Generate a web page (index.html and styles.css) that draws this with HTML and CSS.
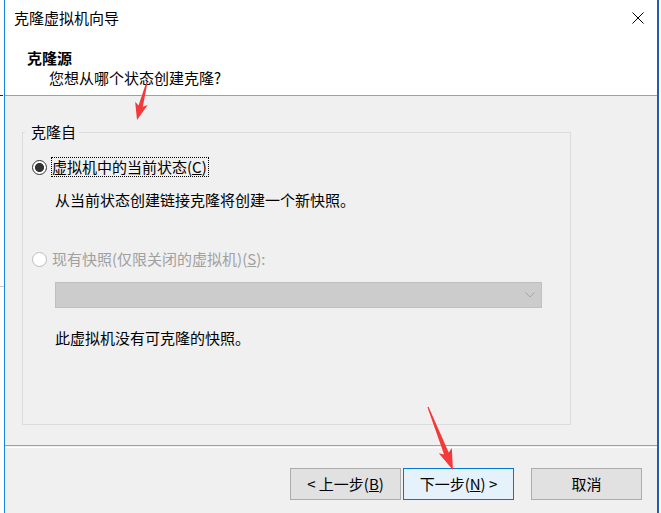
FILE: index.html
```html
<!DOCTYPE html>
<html lang="zh-CN">
<head>
<meta charset="utf-8">
<title>克隆虚拟机向导</title>
<link rel="stylesheet" href="styles.css">
</head>
<body>
<div class="screen">
  <div class="strip">
    <span class="stray s1"></span>
    <span class="stray s2"></span>
  </div>
  <div class="window">
    <div class="titlebar">
      <span class="title">克隆虚拟机向导</span>
      <svg class="close" width="12" height="12" viewBox="0 0 12 12"><path d="M0.5 0.5 L11.5 11.5 M11.5 0.5 L0.5 11.5" stroke="#000" stroke-width="1" fill="none"/></svg>
    </div>
    <div class="header">
      <div class="h-title">克隆源</div>
      <div class="h-sub">您想从哪个状态创建克隆?</div>
    </div>
    <div class="content">
      <fieldset class="group">
        <legend>克隆自</legend>
        <div class="opt opt1"><span class="radio checked"></span><span class="focus">虚拟机中的当前状态(<u>C</u>)</span></div>
        <div class="desc d1">从当前状态创建链接克隆将创建一个新快照。</div>
        <div class="opt opt2 disabled"><span class="radio"></span><span class="lbl">现有快照(仅限关闭的虚拟机)(<u>S</u>):</span></div>
        <div class="combo"><svg width="10" height="6" viewBox="0 0 10 6"><polyline points="0.5,0.5 5,5 9.5,0.5" stroke="#a6a6a6" stroke-width="1" fill="none"/></svg></div>
        <div class="desc d2">此虚拟机没有可克隆的快照。</div>
      </fieldset>
    </div>
    <div class="sep"></div>
    <div class="footer">
      <button class="btn">&lt; 上一步(<u>B</u>)</button>
      <button class="btn primary">下一步(<u>N</u>) &gt;</button>
      <button class="btn cancel">取消</button>
    </div>
  </div>
  <svg class="arrows" width="661" height="513" viewBox="0 0 661 513">
    <polygon transform="translate(147 82) rotate(14.7)" points="-0.6,0 0.6,0 2.2,25 6.5,22 0,39.3 -6.5,22 -2.2,25" fill="#f23a3a"/>
    <polygon transform="translate(428 407) rotate(-21.6)" points="-0.6,0 0.6,0 2.5,50 7,47 0,67.8 -7,47 -2.5,50" fill="#f23a3a"/>
  </svg>
</div>
</body>
</html>
```

FILE: styles.css
```css
html, body {
  margin: 0;
  padding: 0;
  background: #fff;
  overflow: hidden;
}

.screen {
  position: relative;
  width: 661px;
  height: 513px;
  display: flex;
  font-family: "Noto Sans CJK SC", "Noto Sans", sans-serif;
  font-size: 15px;
  color: #000;
}

.strip {
  width: 4px;
  display: flex;
  flex-direction: column;
}

.stray {
  display: block;
  height: 1px;
}

.s1 {
  margin-top: 95px;
  width: 3px;
  background: #222;
}

.s2 {
  margin-top: 190px;
  width: 4px;
  background: #c8c8c8;
}

.window {
  width: 655px;
  height: 513px;
  box-sizing: border-box;
  border-left: 1px solid #1a84dc;
  border-right: 2px solid #1f5fae;
  display: flex;
  flex-direction: column;
  background: #f0f0f0;
}

.titlebar {
  height: 36px;
  background: #fff;
  display: flex;
  align-items: center;
  justify-content: space-between;
  padding: 0 13px 0 9px;
}

.title {
  line-height: 36px;
}

.close {
  display: block;
}

.header {
  background: #fff;
  padding: 11px 0 7px 22px;
  border-bottom: 1px solid #a0a0a0;
}

.h-title {
  font-weight: bold;
  line-height: 21px;
}

.h-sub {
  line-height: 20px;
  padding-left: 22px;
}

.content {
  height: 349px;
  box-sizing: border-box;
  padding: 26px 0 0 17px;
}

.group {
  margin: 0;
  padding: 0;
  width: 549px;
  height: 303px;
  box-sizing: border-box;
  border: 1px solid #dcdcdc;
  min-inline-size: 0;
}

.group legend {
  margin-left: 2px;
  padding: 0 3px 0 6px;
  line-height: 20px;
}

.opt {
  display: flex;
  align-items: center;
  padding-left: 9px;
  height: 20px;
}

.opt1 {
  margin-top: 15px;
}

.opt2 {
  margin-top: 39px;
}

.radio {
  width: 15px;
  height: 15px;
  box-sizing: border-box;
  border-radius: 50%;
  border: 1px solid #333;
  background: #fff;
  margin-right: 4px;
  flex: none;
}

.radio.checked {
  background: radial-gradient(circle, #333 0 4.2px, #fff 4.8px);
}

.disabled .radio {
  border-color: #bcbcbc;
}

.focus {
  border: 1px dotted #000;
  line-height: 18px;
  padding: 0 1px 0 0;
}

.lbl {
  line-height: 20px;
  padding-left: 1px;
}

.disabled {
  color: #a0a0a0;
}

.desc {
  line-height: 20px;
  padding-left: 32px;
}

.d1 {
  margin-top: 13px;
}

.combo {
  margin: 13px 0 0 32px;
  width: 487px;
  height: 26px;
  box-sizing: border-box;
  background: #cccccc;
  border: 1px solid #bfbfbf;
  display: flex;
  align-items: center;
  justify-content: flex-end;
  padding-right: 6px;
}

.combo svg {
  display: block;
}

.d2 {
  margin-top: 20px;
}

.sep {
  height: 3px;
  box-sizing: border-box;
  border-top: 1px solid #a0a0a0;
  border-bottom: 1px solid #fff;
}

.footer {
  flex: 1;
  display: flex;
  justify-content: flex-end;
  align-items: flex-start;
  padding: 20px 15px 0 0;
  gap: 2px;
}

.btn {
  width: 111px;
  height: 32px;
  box-sizing: border-box;
  border: 1px solid #adadad;
  background: #e1e1e1;
  font-family: "Noto Sans CJK SC", "Noto Sans", sans-serif;
  font-size: 15px;
  line-height: 28px;
  color: #000;
  padding: 0;
  margin: 0;
}

.btn.primary {
  background: #e5f1fb;
  border-color: #0078d7;
}

.btn.cancel {
  margin-left: 15px;
}

.arrows {
  position: absolute;
  left: 0;
  top: 0;
  pointer-events: none;
}
```
